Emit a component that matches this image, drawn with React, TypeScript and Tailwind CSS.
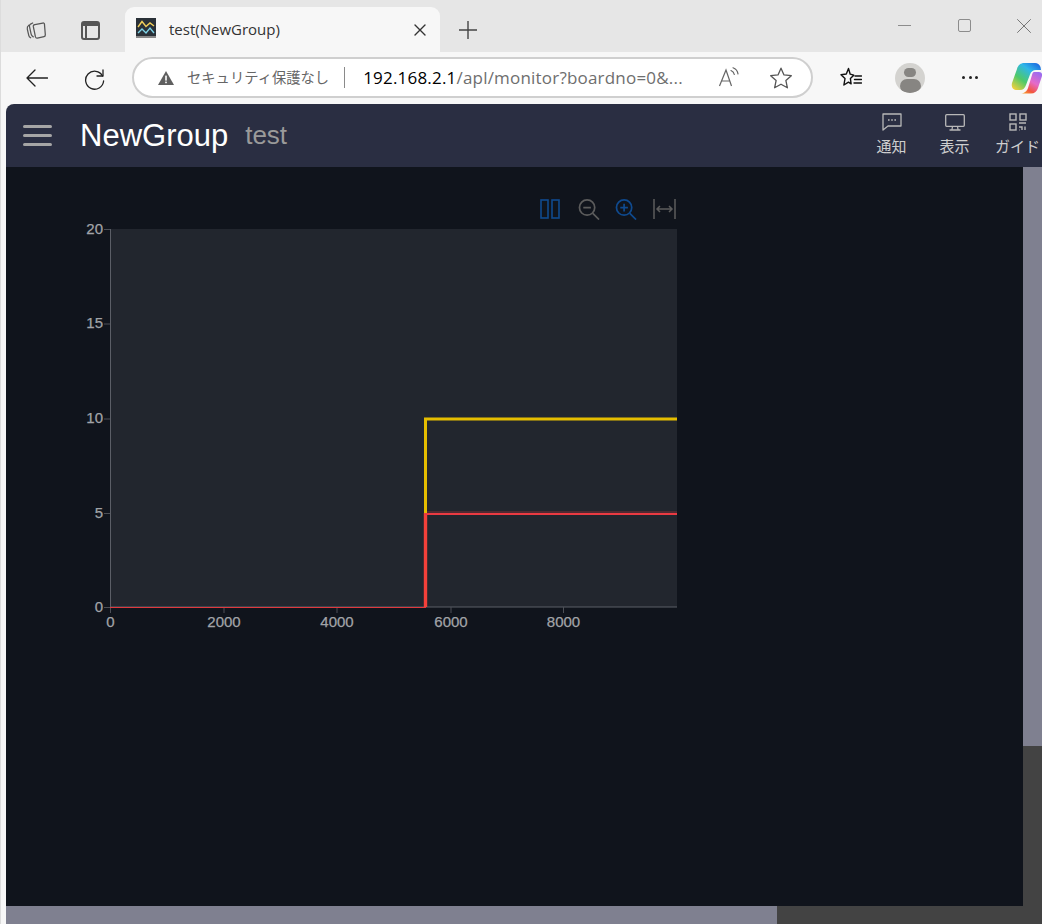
import React from "react";

const ui = { fontFamily: '"Open Sans", "Noto Sans CJK JP", sans-serif' };

function ChromeIcon({ w = 24, h = 24, vb = "0 0 24 24", stroke = "#333", sw = 1.3, children, className = "" }: any) {
  return (
    <svg width={w} height={h} viewBox={vb} fill="none" stroke={stroke} strokeWidth={sw} strokeLinecap="round" strokeLinejoin="round" className={className}>
      {children}
    </svg>
  );
}

function TabStrip() {
  return (
    <div className="flex h-[52px] shrink-0 items-end bg-[#e6e6e6]">
      <div className="flex h-[52px] w-[124px] shrink-0 items-center pl-[23px] pt-[8px]">
        <ChromeIcon w={25} h={23}>
          <path d="M4 6.5c-1.5 1-2 2-1.6 4l1.5 6.5c.3 1.2 1 2 2 2.6" stroke="#555" />
          <path d="M8 4.2 5.8 5.3c-1 .6-1.3 1.4-1.1 2.6l1.7 8c.3 1.3 1.1 2.2 2.2 2.8" stroke="#555" />
          <path d="M10.2 5.8 18.5 4.2c1-.2 1.7.3 1.8 1.2l.9 11c.1 1-.4 1.7-1.3 1.9l-7 1.7c-1 .2-1.7-.3-2-1.3L8.7 8c-.2-1.1.4-2 1.5-2.2Z" stroke="#555" />
        </ChromeIcon>
        <div className="ml-[32px] h-[19px] w-[19px] rounded-[3px] border-2 border-[#555] border-t-[5px]">
          <div className="h-full w-[4px] border-r-2 border-[#555]" />
        </div>
      </div>
      <div className="flex h-[45px] w-[315px] shrink-0 items-center rounded-t-[9px] bg-[#f7f7f7] pl-[11px] pr-[12px]">
        <svg width="20" height="20" viewBox="0 0 20 20" className="mb-[3px]">
          <rect width="20" height="20" fill="#2a3138" />
          <rect y="18" width="20" height="2" fill="#888" />
          <path d="M2 9 6 3.5l4 5 4-3.5 4 3" fill="none" stroke="#f2cf5b" strokeWidth="1.4" />
          <path d="M2 15l4-4 4 4 4-5 4 5" fill="none" stroke="#7fd4e8" strokeWidth="1.4" />
        </svg>
        <span className="ml-[13px] text-[15px] text-[#333]" style={ui}>test(NewGroup)</span>
        <ChromeIcon w={12} h={12} vb="0 0 12 12" sw={1.4} className="ml-auto mr-[2px]">
          <path d="M1 1l10 10M11 1 1 11" />
        </ChromeIcon>
      </div>
      <div className="flex h-[45px] w-[56px] items-center justify-center">
        <ChromeIcon w={18} h={18} vb="0 0 18 18" stroke="#444" sw={1.4}>
          <path d="M9 0v18M0 9h18" />
        </ChromeIcon>
      </div>
      <div className="flex h-[52px] flex-1 items-start justify-end">
        <div className="flex h-[52px] w-[60px] items-center justify-center pb-[1px]">
          <div className="h-px w-[13px] bg-[#8c8c8c]" />
        </div>
        <div className="flex h-[52px] w-[60px] items-center justify-center pb-[1px]">
          <div className="h-[13px] w-[13px] rounded-[2px] border border-[#8c8c8c]" />
        </div>
        <div className="flex h-[52px] w-[48px] items-center justify-center pb-[1px] pl-[12px]">
          <ChromeIcon w={14} h={14} vb="0 0 14 14" stroke="#777" sw={1}>
            <path d="M.5.5l13 13M13.5.5l-13 13" />
          </ChromeIcon>
        </div>
      </div>
    </div>
  );
}

function Toolbar() {
  return (
    <div className="flex h-[52px] shrink-0 items-center bg-[#f7f7f7] pb-[1px]">
      <div className="flex w-[131px] shrink-0 items-center pl-[25px]">
        <ChromeIcon w={22} h={18} vb="0 0 22 18" stroke="#222" sw={1.3}>
          <path d="M21.5 9H1M9 1 1 9l8 8" />
        </ChromeIcon>
        <ChromeIcon w={24} h={24} stroke="#222" sw={1.3} className="ml-[35px]">
          <path d="M20 4v6h-6" />
          <path d="M20 10a9 9 0 1 0 1 5" transform="translate(-.4 0)" />
        </ChromeIcon>
      </div>
      <div className="flex h-[41px] w-[681px] shrink-0 items-center rounded-full border-2 border-[#cfcfcf] bg-white pl-[24px] pr-[18px]">
        <svg width="16" height="14" viewBox="0 0 16 14">
          <path d="M8 0l8 14H0Z" fill="#5f5f5f" />
          <rect x="7.2" y="4.6" width="1.6" height="5" fill="#fff" />
          <rect x="7.2" y="10.6" width="1.6" height="1.6" fill="#fff" />
        </svg>
        <span className="ml-[13px] whitespace-nowrap text-[14.3px] text-[#666]" style={ui}>セキュリティ保護なし</span>
        <div className="ml-[15px] h-[21px] w-px bg-[#8a8a8a]" />
        <span className="ml-[18px] whitespace-nowrap text-[17px] tracking-[0.2px] text-[#6e6e6e]" style={ui}>
          <span className="text-black">192.168.2.1</span>/apl/monitor?boardno=0&amp;...
        </span>
        <svg width="22" height="22" viewBox="0 0 22 22" fill="none" stroke="#666" strokeWidth="1.2" className="ml-auto">
          <path d="M1.5 19 8 3l5.5 16M4 14h7.5" />
          <path d="M13 3.5c2 .8 3 2 3.3 4M15 .8c2.7 1 4.5 3 5 6" strokeLinecap="round" />
        </svg>
        <svg width="24" height="24" viewBox="0 0 24 24" fill="none" stroke="#555" strokeWidth="1.3" strokeLinejoin="round" className="ml-[29px]">
          <path d="M12 2.2l3 6.7 7.3.8-5.4 4.9 1.5 7.2L12 18.2l-6.4 3.6L7.1 14.6 1.7 9.7 9 8.9Z" />
        </svg>
      </div>
      <svg width="22" height="22" viewBox="0 0 22 22" fill="none" stroke="#111" strokeWidth="1.4" strokeLinejoin="round" className="ml-[27px] shrink-0">
        <path d="M8.5 1.5 6.3 7 1 7.7l4 3.9L3.9 18l4.6-2.8 2.6 1.6-.7-5.2 3.4-3.4-3.6-1Z" />
        <path d="M15 9h6.5M14.5 12.5h7M14 16h7.5" strokeLinecap="round" />
      </svg>
      <div className="ml-[33px] flex h-[30px] w-[30px] shrink-0 flex-col items-center overflow-hidden rounded-full bg-[#d4d3d0]">
        <div className="mt-[5px] h-[12px] w-[12px] rounded-full bg-[#878582]" />
        <div className="mt-[2px] h-[16px] w-[21px] rounded-full bg-[#878582]" />
      </div>
      <div className="ml-[37px] flex w-[16px] shrink-0 justify-between">
        <div className="h-[3px] w-[3px] rounded-full bg-[#222]" />
        <div className="h-[3px] w-[3px] rounded-full bg-[#222]" />
        <div className="h-[3px] w-[3px] rounded-full bg-[#222]" />
      </div>
      <svg width="31" height="32" viewBox="0 0 31 32" className="ml-[33px] shrink-0">
        <defs>
          <linearGradient id="cpA" x1="0.9" y1="0" x2="0.1" y2="1">
            <stop offset="0" stopColor="#1a66e0" />
            <stop offset=".3" stopColor="#2fb7e8" />
            <stop offset=".65" stopColor="#4ec96a" />
            <stop offset="1" stopColor="#f5d03a" />
          </linearGradient>
          <linearGradient id="cpB" x1="0.8" y1="0" x2="0.2" y2="1">
            <stop offset="0" stopColor="#9a6cf0" />
            <stop offset=".45" stopColor="#e66ac8" />
            <stop offset=".8" stopColor="#f2553f" />
            <stop offset="1" stopColor="#f79a2e" />
          </linearGradient>
        </defs>
        <path d="M13 1H24c2.5 0 4.5 1.5 5.5 4L30 8h-5c-3 0-5 1.500-6 4.500L15 23c-1 3-3 5-6 5H6C2 28 0 25 1 21L6 7c1-4 4-6 7-6Z" fill="url(#cpA)" />
        <path d="M23 10h5c2.500 0 3.500 2 3 4L27 26c-1 3.500-3.500 5.500-7 5.500H9c4 0 7-2 8-5.500l4-13c.3-1.500 1-3 2-3Z" fill="url(#cpB)" />
      </svg>
    </div>
  );
}

function HeaderItem({ label, children }: any) {
  return (
    <div className="flex w-[63px] shrink-0 flex-col items-center">
      <div className="flex h-[18px] items-center">{children}</div>
      <span className="mt-[5px] whitespace-nowrap text-[15px] leading-[20px] text-[#cfcfcf]" style={ui}>{label}</span>
    </div>
  );
}

function Header() {
  return (
    <div className="flex h-[63px] shrink-0 items-center rounded-tl-[8px] bg-[#2a2e42]">
      <div className="ml-[17px] flex h-[21px] w-[29px] flex-col justify-between">
        <div className="h-[3px] rounded-full bg-[#a5a5a5]" />
        <div className="h-[3px] rounded-full bg-[#a5a5a5]" />
        <div className="h-[3px] rounded-full bg-[#a5a5a5]" />
      </div>
      <span className="ml-[28px] pt-[1px] text-[31px] text-white" style={{ fontFamily: '"Liberation Sans", sans-serif' }}>NewGroup</span>
      <span className="ml-[17px] text-[26px] text-[#9a9a9a]" style={{ fontFamily: '"Liberation Sans", sans-serif' }}>test</span>
      <div className="ml-auto mr-[-7px] flex h-full items-start pt-[9px]">
        <HeaderItem label="通知">
          <svg width="20" height="18" viewBox="0 0 20 18" fill="none" stroke="#b8b8b8" strokeWidth="1.3">
            <path d="M1 1h18v12H6l-5 4Z" strokeLinejoin="round" />
            <path d="M6 7h1.6M9.2 7h1.6M12.4 7H14" strokeWidth="1.6" />
          </svg>
        </HeaderItem>
        <HeaderItem label="表示">
          <svg width="20" height="17" viewBox="0 0 20 17" fill="none" stroke="#b8b8b8" strokeWidth="1.3">
            <rect x=".7" y=".7" width="18.6" height="11.6" rx="1" />
            <path d="M7.5 12.5 7 15.5M12.5 12.5l.5 3M4.5 16h11" />
          </svg>
        </HeaderItem>
        <HeaderItem label="ガイド">
          <svg width="18" height="18" viewBox="0 0 18 18" fill="none" stroke="#b8b8b8" strokeWidth="1.4">
            <rect x="1" y="1" width="6" height="6" />
            <rect x="11" y="1" width="6" height="6" />
            <rect x="1" y="11" width="6" height="6" />
            <path d="M10 10h7M10 14h3v3M16 13.5V17M10 17h.5" />
          </svg>
        </HeaderItem>
      </div>
    </div>
  );
}

function ChartTools() {
  return (
    <div className="flex h-[22px] w-[606px] items-center justify-end">
      <svg width="20" height="20" viewBox="0 0 20 20" fill="none" stroke="#0f4a8f" strokeWidth="1.6">
        <rect x="1" y="1" width="7" height="18" />
        <rect x="12" y="1" width="7" height="18" />
      </svg>
      <svg width="22" height="21" viewBox="0 0 22 22" fill="none" stroke="#5c5c5c" strokeWidth="1.8" className="ml-[18px] mt-[1px]">
        <circle cx="9" cy="9" r="8" />
        <path d="M5 9h8M15 15l6.5 6.500" />
      </svg>
      <svg width="22" height="21" viewBox="0 0 22 22" fill="none" stroke="#0f4a8f" strokeWidth="1.8" className="ml-[15px] mt-[1px]">
        <circle cx="9" cy="9" r="8" />
        <path d="M5 9h8M9 5v8M15 15l6.500 6.500" />
      </svg>
      <svg width="23" height="22" viewBox="0 0 23 22" fill="none" stroke="#5c5c5c" strokeWidth="1.5" className="ml-[16px]">
        <path d="M1 1v20M22 1v20M4 11h15M7 8l-3 3 3 3M16 8l3 3-3 3" />
      </svg>
    </div>
  );
}

function Chart() {
  const xt = [[0, 0.5], [2000, 114], [4000, 227], [6000, 341], [8000, 453.5]] as const;
  const yt = [[20, 0], [15, 94.5], [10, 189.5], [5, 284], [0, 378]] as const;
  const ox = 40;
  const oy = 8;
  return (
    <svg width="640" height="422" viewBox="0 0 640 422" className="mt-[1px] block" style={{ fontFamily: '"Liberation Sans", sans-serif' }}>
      <rect x={ox} y={oy} width="567" height="378" fill="#22262e" />
      <path d={`M${ox + 0.5} ${oy}V${oy + 378}H${ox + 567}`} fill="none" stroke="#5b5e66" strokeWidth="1" />
      {yt.map(([l, y]) => (
        <g key={l}>
          <path d={`M${ox - 6} ${oy + y + 0.5}H${ox}`} stroke="#4c4f56" />
          <text x={ox - 7} y={oy + y + 4.5} textAnchor="end" fontSize="15" fill="#a2a4a8" stroke="#a2a4a8" strokeWidth="0.25">{l}</text>
        </g>
      ))}
      {xt.map(([l, x]) => (
        <g key={l}>
          <path d={`M${ox + x} ${oy + 378}v6`} stroke="#4c4f56" />
          <text x={ox + x} y={oy + 398} textAnchor="middle" fontSize="15" fill="#a2a4a8" stroke="#a2a4a8" strokeWidth="0.25">{l}</text>
        </g>
      ))}
      <path d={`M${ox} ${oy + 378.5}H356`} stroke="#e0393e" strokeWidth="1" />
      <path d={`M355.500 ${oy + 189}V${oy + 284}`} stroke="#e5bd00" strokeWidth="3" />
      <path d={`M354 ${oy + 190}H607`} stroke="#e5bd00" strokeWidth="3" />
      <path d={`M355.500 ${oy + 284}V${oy + 378}`} stroke="#f5403a" strokeWidth="3.4" />
      <path d={`M357 ${oy + 283}H607`} stroke="#7a2f36" strokeWidth="1" />
      <path d={`M355 ${oy + 285}H607`} stroke="#ea3a42" strokeWidth="2" />
    </svg>
  );
}

export default function App() {
  return (
    <div className="flex h-[924px] w-[1042px] flex-col overflow-hidden border-l border-[#dcdcdc] bg-[#f7f7f7]">
      <TabStrip />
      <Toolbar />
      <div className="flex min-h-0 flex-1 pl-[5px]">
        <div className="flex min-w-0 flex-1 flex-col">
          <Header />
          <div className="flex min-h-0 flex-1">
            <div className="flex-1 bg-[#10141c] pl-[64px] pt-[31px]">
              <ChartTools />
              <Chart />
            </div>
            <div className="flex w-[19px] shrink-0 flex-col bg-[#434343]">
              <div className="h-[579px] bg-[#7f8090]" />
            </div>
          </div>
          <div className="h-[18px] shrink-0 bg-[#434343]">
            <div className="h-full w-[771px] bg-[#7f8090]" />
          </div>
        </div>
      </div>
    </div>
  );
}
